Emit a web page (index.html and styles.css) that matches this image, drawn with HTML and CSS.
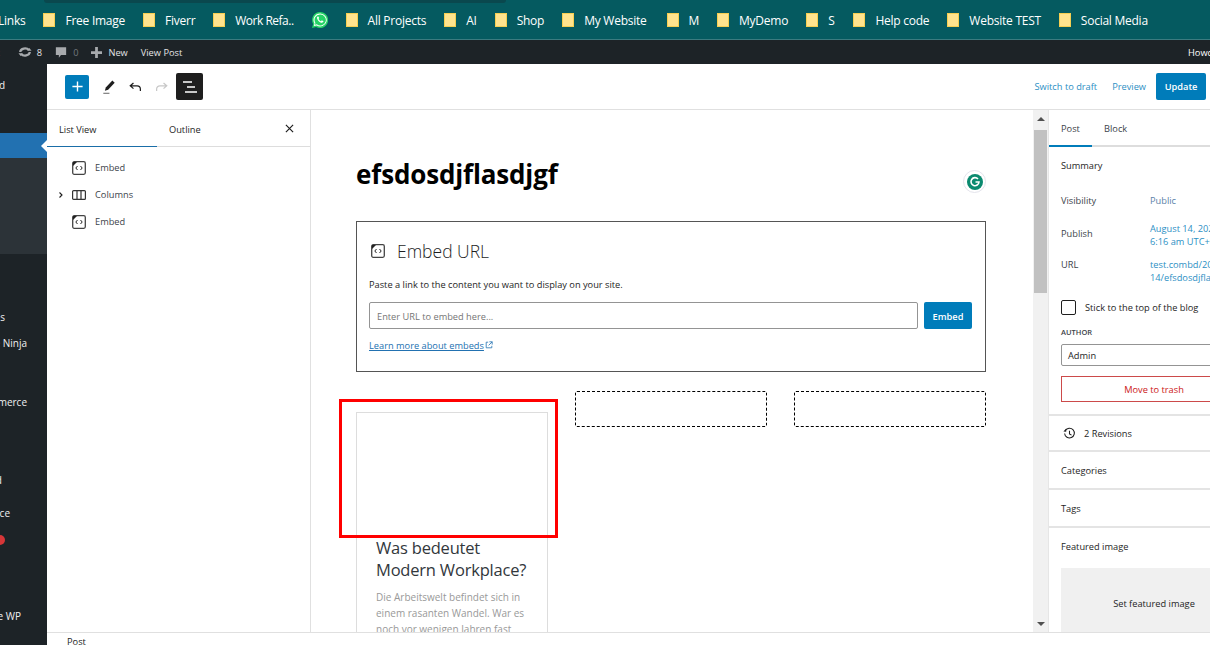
FILE: index.html
```html
<!DOCTYPE html>
<html lang="en">
<head>
    <meta charset="UTF-8">
    <meta name="viewport" content="width=device-width, initial-scale=1.0">
    <title>Edit Post</title>
    <link rel="stylesheet" href="styles.css">
</head>

<body>
    <!-- browser bookmarks -->
    <div class="bookmarks">
        <span class="tab-edge"></span>
        <span class="bm bm-first">Links</span>
        <span class="bm"><i class="folder"></i>Free Image</span>
        <span class="bm"><i class="folder"></i>Fiverr</span>
        <span class="bm bm-tight"><i class="folder"></i>Work Refa..</span>
        <span class="bm">
            <svg class="wa" viewBox="0 0 16 16"><path fill="#25d366" d="M8 0a8 8 0 0 0-6.9 12L0 16l4.100-1.100A8 8 0 1 0 8 0z"/><path fill="#fff" d="M8 1.500a6.500 6.500 0 0 0-5.500 9.900l-.7 2.700 2.800-.7A6.500 6.500 0 1 0 8 1.500z"/><path fill="#25d366" d="M8 2.500a5.500 5.500 0 0 0-4.600 8.400l-.4 1.800 1.800-.5A5.500 5.500 0 1 0 8 2.500z"/><path fill="#fff" d="M5.900 4.500c-.3 0-.8.400-.9 1.100-.1 1 .5 2.200 1.500 3.300 1 1.100 2.300 1.900 3.300 1.900.8 0 1.500-.6 1.600-1.200 0-.3 0-.5-.1-.5l-1.300-.7c-.2-.1-.3 0-.4.100l-.5.700c-.1.100-.2.100-.4 0-.9-.4-1.700-1.200-2.200-2.100-.1-.2 0-.3.100-.4l.4-.5c.1-.1.100-.2 0-.4l-.6-1.200c-.1-.2-.3-.2-.5-.2z"/></svg>
        </span>
        <span class="bm"><i class="folder"></i>All Projects</span>
        <span class="bm"><i class="folder"></i>AI</span>
        <span class="bm"><i class="folder"></i>Shop</span>
        <span class="bm bm-wide"><i class="folder"></i>My Website</span>
        <span class="bm"><i class="folder"></i>M</span>
        <span class="bm"><i class="folder"></i>MyDemo</span>
        <span class="bm bm-wide2"><i class="folder"></i>S</span>
        <span class="bm"><i class="folder"></i>Help code</span>
        <span class="bm"><i class="folder"></i>Website TEST</span>
        <span class="bm"><i class="folder"></i>Social Media</span>
    </div>

    <!-- wp admin bar -->
    <div class="adminbar">
        <span class="ab-item ab-first">Post</span>
        <span class="ab-item">
            <svg class="ab-icon ab-sync" viewBox="0 0 16 16"><path fill="none" stroke="#a7aaad" stroke-width="2.600" d="M2.500 8a5.500 4.500 0 0 1 10-2.200M13.500 8a5.500 4.500 0 0 1-10 2.200"/><path fill="#a7aaad" d="M10.500 6.500h5l-2.500-3zM5.500 9.500h-5l2.500 3z"/></svg>
            8
        </span>
        <span class="ab-item ab-muted">
            <svg class="ab-icon ab-comment" viewBox="0 0 14 14"><path fill="#a7aaad" d="M1 1h12v9H7l-2.500 3v-3H1z"/></svg>
            0
        </span>
        <span class="ab-item">
            <svg class="ab-icon ab-plus" viewBox="0 0 12 12"><path fill="#a7aaad" d="M4.500 0h3v4.500H12v3H7.500V12h-3V7.500H0v-3h4.500z"/></svg>
            New
        </span>
        <span class="ab-item">View Post</span>
        <span class="howdy">Howdy, Admin</span>
    </div>

    <div class="page">
        <!-- wp admin menu, mostly cut off by the window -->
        <nav class="adminmenu">
            <div class="menu-item m-dash">Dashboard</div>
            <div class="menu-active"></div>
            <div class="menu-sub"></div>
            <div class="menu-item m-pages">Pages</div>
            <div class="menu-item m-ninja">Table Ninja</div>
            <div class="menu-item m-woo">WooCommerce</div>
            <div class="menu-item m-field">Field</div>
            <div class="menu-item m-perf">Performance</div>
            <div class="menu-badge"></div>
            <div class="menu-item m-wp">Hide WP</div>
        </nav>

        <div class="editor">
            <header class="toolbar">
                <button class="add-btn" type="button">
                    <svg viewBox="0 0 14 14"><path fill="none" stroke="#fff" stroke-width="1.500" d="M7 1.500v11M1.500 7h11"/></svg>
                </button>
                <svg class="tool tool-pen" viewBox="0 0 16 18"><path fill="#1e1e1e" d="M11.800 1.500l2.700 2.500-7.500 8.200-3.700 1.200 1-3.700z"/><path fill="#888" d="M1.500 15.500h7v1.500h-7z"/></svg>
                <svg class="tool tool-undo" viewBox="0 0 16 12"><path fill="none" stroke="#1e1e1e" stroke-width="1.500" d="M5.500 1L1.500 4.500 5.500 8M1.500 4.500h8.500a4 4 0 0 1 4 4v2.500"/></svg>
                <svg class="tool tool-redo" viewBox="0 0 16 12"><path fill="none" stroke="#c8c8c8" stroke-width="1.500" d="M10.500 1l4 3.500-4 3.500M14.500 4.500H6a4 4 0 0 0-4 4v2.500"/></svg>
                <button class="list-btn" type="button">
                    <svg viewBox="0 0 14 12"><path fill="none" stroke="#fff" stroke-width="1.300" d="M0 1h9M4 6h8M2 11h12"/></svg>
                </button>
                <div class="toolbar-right">
                    <a class="tb-link">Switch to draft</a>
                    <a class="tb-link">Preview</a>
                    <button class="update-btn" type="button">Update</button>
                </div>
            </header>

            <div class="workspace">
                <aside class="listview">
                    <div class="lv-tabs">
                        <span class="lv-tab lv-tab-active">List View</span>
                        <span class="lv-tab">Outline</span>
                        <svg class="lv-close" viewBox="0 0 10 10"><path fill="none" stroke="#1e1e1e" stroke-width="1.300" d="M1 1l8 8M9 1l-8 8"/></svg>
                    </div>
                    <div class="lv-row">
                        <svg class="embed-icon" viewBox="0 0 14 14"><rect x=".7" y=".7" width="12.600" height="12.600" rx="1.500" fill="none" stroke="#444" stroke-width="1.300"/><path fill="#222" d="M1 1h4L1 5z"/><path fill="none" stroke="#222" d="M5.500 5L3.800 7l1.700 2M8.500 5l1.700 2-1.700 2"/></svg>
                        Embed
                    </div>
                    <div class="lv-row">
                        <svg class="lv-caret" viewBox="0 0 6 8"><path fill="none" stroke="#1e1e1e" stroke-width="1.100" d="M1.500 1.500l2.500 2.500-2.500 2.500"/></svg>
                        <svg class="embed-icon" viewBox="0 0 14 12"><rect x=".6" y="1.600" width="12.800" height="8.800" rx="1" fill="none" stroke="#333" stroke-width="1.200"/><path stroke="#333" stroke-width="1.200" d="M5 2v8M9 2v8"/></svg>
                        Columns
                    </div>
                    <div class="lv-row">
                        <svg class="embed-icon" viewBox="0 0 14 14"><rect x=".7" y=".7" width="12.600" height="12.600" rx="1.500" fill="none" stroke="#444" stroke-width="1.300"/><path fill="#222" d="M1 1h4L1 5z"/><path fill="none" stroke="#222" d="M5.500 5L3.800 7l1.700 2M8.500 5l1.700 2-1.700 2"/></svg>
                        Embed
                    </div>
                </aside>

                <main class="content">
                    <h1 class="post-title">efsdosdjflasdjgf</h1>
                    <span class="grammarly">
                        <svg viewBox="0 0 16 16"><circle cx="8" cy="8" r="8" fill="#0b8a6f"/><path fill="none" stroke="#fff" stroke-width="1.600" d="M11 5a4 4 0 1 0 1 3H8.500"/></svg>
                    </span>

                    <section class="embed-box">
                        <div class="embed-head">
                            <svg class="embed-icon" viewBox="0 0 14 14"><rect x=".7" y=".7" width="12.600" height="12.600" rx="1.500" fill="none" stroke="#444" stroke-width="1.300"/><path fill="#222" d="M1 1h4L1 5z"/><path fill="none" stroke="#222" d="M5.500 5L3.800 7l1.700 2M8.500 5l1.700 2-1.700 2"/></svg>
                            Embed URL
                        </div>
                        <p class="embed-text">Paste a link to the content you want to display on your site.</p>
                        <div class="embed-form">
                            <input class="embed-input" type="text" placeholder="Enter URL to embed here...">
                            <button class="embed-btn" type="button">Embed</button>
                        </div>
                        <a class="embed-learn">Learn more about embeds</a>
                        <svg class="ext-icon" viewBox="0 0 10 10"><path fill="none" stroke="#2271b1" d="M4 1.500H1.500v7h7V6M5.500 1h3.500v3.500M9 1L4.500 5.500"/></svg>
                    </section>

                    <div class="columns">
                        <div class="col">
                            <div class="card">
                                <div class="card-img"></div>
                                <h3>Was bedeutet Modern Workplace?</h3>
                                <p>Die Arbeitswelt befindet sich in einem rasanten Wandel. War es noch vor wenigen Jahren fast undenkbar</p>
                            </div>
                            <div class="red-mark"></div>
                        </div>
                        <div class="col"><div class="slot"></div></div>
                        <div class="col"><div class="slot"></div></div>
                    </div>
                </main>

                <div class="scrollbar">
                    <span class="sb-up"></span>
                    <span class="sb-thumb"></span>
                    <span class="sb-down"></span>
                </div>

                <aside class="settings">
                    <div class="set-tabs">
                        <span class="set-tab set-tab-active">Post</span>
                        <span class="set-tab">Block</span>
                    </div>
                    <div class="panel panel-summary">
                        <div class="panel-title">Summary</div>
                        <div class="meta meta-vis"><span>Visibility</span><a class="meta-val">Public</a></div>
                        <div class="meta meta-pub"><span>Publish</span><a class="meta-val">August 14, 2023<br>6:16 am UTC+0</a></div>
                        <div class="meta meta-url"><span>URL</span><a class="meta-val">test.combd/2023/08/<br>14/efsdosdjflasdjgf</a></div>
                        <label class="stick"><i class="check"></i>Stick to the top of the blog</label>
                        <div class="author-label">AUTHOR</div>
                        <div class="author-select">Admin</div>
                        <button class="trash-btn" type="button">Move to trash</button>
                    </div>
                    <div class="panel panel-rev">
                        <svg viewBox="0 0 16 16"><path fill="none" stroke="#1e1e1e" stroke-width="1.300" d="M2.800 4.500A6 6 0 1 1 2 8M8 4.500V8.500l2.500 1.500"/><path fill="#1e1e1e" d="M.5 5.500l3.500.3L3.700 2z"/></svg>
                        2 Revisions
                    </div>
                    <div class="panel panel-row">Categories</div>
                    <div class="panel panel-row">Tags</div>
                    <div class="panel panel-image">
                        <div class="panel-row-title">Featured image</div>
                        <div class="image-box">Set featured image</div>
                    </div>
                </aside>
            </div>

            <footer class="statusbar">Post</footer>
        </div>
    </div>
</body>
</html>
```

FILE: styles.css
```css
*{
    box-sizing: border-box;
}
html,body{
    margin: 0;
    height: 100%;
    overflow: hidden;
}
body{
    width: 1210px;
    height: 645px;
    display: flex;
    flex-direction: column;
    font-family: "Open Sans", "Noto Sans", sans-serif;
    font-size: 9.25px;
    color: #1e1e1e;
    background: white;
}
button{
    font-family: inherit;
    border: 0;
    padding: 0;
}

/* bookmarks */
.bookmarks{
    position: relative;
    height: 40px;
    flex: none;
    display: flex;
    align-items: center;
    background: #055a60;
    border-bottom: 1px solid #3b7b80;
    padding-top: 1px;
    color: #fff;
    font-size: 12px;
    letter-spacing: -0.25px;
    white-space: nowrap;
}
.tab-edge{
    position: absolute;
    top: 0;
    left: 44px;
    width: 462px;
    height: 3px;
    background: #0a484e;
    border-radius: 0 0 6px 6px;
}
.bm{
    display: flex;
    align-items: center;
    flex: none;
    margin-right: 18px;
}
.bm-first{
    margin-left: -2px;
    margin-right: 18px;
}
.bm-tight{
    letter-spacing: -0.5px;
}
.bm-wide{
    margin-right: 20px;
}
.bm-wide2{
    margin-right: 19px;
}
.folder{
    width: 12px;
    height: 14px;
    margin-right: 10px;
    background: #ffe38e;
    border: 1px solid #f6cf52;
}
.wa{
    width: 16px;
    height: 16px;
}

/* admin bar */
.adminbar{
    height: 24px;
    flex: none;
    display: flex;
    align-items: center;
    background: #1d2327;
    color: #e4e4e6;
    font-size: 9.25px;
    white-space: nowrap;
}
.ab-item{
    display: flex;
    align-items: center;
    flex: none;
    gap: 6px;
    margin-right: 13px;
}
.ab-first{
    margin-left: -19px;
    margin-right: 18px;
}
.ab-muted{
    color: #72777c;
}
.ab-icon{
    width: 13px;
    height: 13px;
}
.ab-sync{
    width: 14px;
    height: 14px;
    margin-right: -1px;
}
.ab-comment{
    width: 12px;
}
.ab-plus{
    width: 11px;
    height: 11px;
}
.howdy{
    margin-left: auto;
    width: 22px;
    flex: none;
    color: #fff;
    overflow: hidden;
}

/* admin menu */
.page{
    flex: 1;
    min-height: 0;
    display: flex;
}
.adminmenu{
    width: 47px;
    flex: none;
    background: #1d2327;
    color: #f0f0f1;
    font-size: 10px;
    position: relative;
    display: flex;
    flex-direction: column;
    white-space: nowrap;
}
.menu-item{
    display: flex;
    justify-content: flex-end;
    height: 16px;
    line-height: 16px;
}
.m-dash{
    margin-top: 13px;
    width: 5px;
}
.menu-active{
    margin-top: 40px;
    height: 25px;
    background: #2271b1;
    position: relative;
}
.menu-active::after{
    content: "";
    position: absolute;
    right: 0;
    top: 7px;
    border: 6px solid transparent;
    border-right-color: #fff;
}
.menu-sub{
    height: 96px;
    background: #2c3338;
}
.m-pages{
    margin-top: 55px;
    width: 5px;
}
.m-ninja{
    margin-top: 10px;
    width: 27px;
}
.m-woo{
    margin-top: 43px;
    width: 27px;
}
.m-field{
    margin-top: 62px;
    width: 2px;
}
.m-perf{
    margin-top: 17px;
    width: 10px;
}
.menu-badge{
    width: 10px;
    height: 10px;
    margin: 14px 0 0 -5px;
    border-radius: 50%;
    background: #d63638;
}
.m-wp{
    margin-top: 63px;
    width: 21px;
}

/* editor */
.editor{
    flex: 1;
    min-width: 0;
    display: flex;
    flex-direction: column;
}
.toolbar{
    height: 46px;
    flex: none;
    display: flex;
    align-items: center;
    padding-left: 18px;
    border-bottom: 1px solid #e0e0e0;
}
.add-btn{
    width: 24px;
    height: 24px;
    background: #007cba;
    border-radius: 2px;
    display: flex;
    align-items: center;
    justify-content: center;
}
.add-btn svg{
    width: 13px;
    height: 13px;
}
.tool{
    flex: none;
}
.tool-pen{
    width: 14px;
    height: 16px;
    margin-left: 13px;
}
.tool-undo{
    width: 13px;
    height: 10px;
    margin-left: 13px;
}
.tool-redo{
    width: 13px;
    height: 10px;
    margin-left: 13px;
}
.list-btn{
    width: 27px;
    height: 27px;
    margin-left: 8px;
    background: #1e1e1e;
    border-radius: 2px;
    display: flex;
    align-items: center;
    justify-content: center;
}
.list-btn svg{
    width: 14px;
    height: 12px;
}
.toolbar-right{
    margin-left: auto;
    display: flex;
    align-items: center;
    padding-right: 4px;
}
.tb-link{
    color: #2d8fc4;
    margin-right: 15px;
}
.tb-link + .tb-link{
    margin-right: 10px;
}
.update-btn{
    width: 50px;
    height: 27px;
    background: #007cba;
    color: #fff;
    border-radius: 2px;
    font-size: 9.25px;
    font-weight: 600;
}
.workspace{
    flex: 1;
    min-height: 0;
    display: flex;
    overflow: hidden;
}

/* list view panel */
.listview{
    width: 264px;
    flex: none;
    border-right: 1px solid #e0e0e0;
}
.lv-tabs{
    position: relative;
    height: 37px;
    display: flex;
    border-bottom: 1px solid #ddd;
}
.lv-tab{
    width: 110px;
    padding: 13px 0 0 12px;
}
.lv-tab-active{
    border-bottom: 1px solid #1a6ea8;
    height: 37px;
}
.lv-close{
    position: absolute;
    right: 16px;
    top: 14px;
    width: 9px;
    height: 9px;
}
.lv-row{
    position: relative;
    height: 27px;
    display: flex;
    align-items: center;
    padding-left: 25px;
    gap: 9px;
    color: #3c434a;
}
.lv-tabs + .lv-row{
    margin-top: 7px;
}
.embed-icon{
    width: 14px;
    height: 14px;
    flex: none;
}
.lv-caret{
    position: absolute;
    left: 11px;
    width: 6px;
    height: 8px;
}

/* post content */
.content{
    position: relative;
    width: 722px;
    flex: none;
    overflow: hidden;
    padding: 0 47px 0 45px;
}
.post-title{
    margin: 46px 0 0;
    font-size: 26px;
    line-height: 36px;
    font-weight: 700;
    color: #000;
    letter-spacing: -0.15px;
}
.grammarly{
    position: absolute;
    left: 652px;
    top: 60px;
    width: 23px;
    height: 23px;
    border: 1px solid #e4e4ec;
    border-radius: 50%;
    display: flex;
    align-items: center;
    justify-content: center;
}
.grammarly svg{
    width: 16px;
    height: 16px;
}
.embed-box{
    margin-top: 29px;
    height: 151px;
    border: 1px solid #555;
    padding: 17px 13px 0 12px;
}
.embed-head{
    display: flex;
    align-items: center;
    gap: 12px;
    margin-left: 2px;
    height: 24px;
    font-size: 17.5px;
    font-weight: 300;
    color: #1e1e1e;
}
.embed-text{
    margin: 14px 0 0;
    line-height: 16px;
    color: #1e1e1e;
}
.embed-form{
    display: flex;
    margin-top: 9px;
    gap: 6px;
}
.embed-input{
    flex: 1;
    height: 27px;
    border: 1px solid #949494;
    border-radius: 2px;
    padding: 1px 7px 0;
    font-family: inherit;
    font-size: 9.25px;
}
.embed-input::placeholder{
    color: #757575;
}
.embed-btn{
    width: 48px;
    height: 27px;
    padding-top: 1px;
    border-radius: 2px;
    background: #007cba;
    color: #fff;
    font-size: 9.25px;
    font-weight: 600;
}
.embed-learn{
    display: inline-block;
    margin-top: 10px;
    color: #2271b1;
    text-decoration: underline;
}
.ext-icon{
    width: 8px;
    height: 8px;
    margin-left: -1px;
}
.columns{
    display: flex;
    gap: 27px;
    margin-top: 19px;
}
.col{
    position: relative;
    width: 192px;
}
.slot{
    height: 36px;
    border: 1px dashed #000;
    border-radius: 2px;
}
.card{
    margin-top: 21px;
    border: 1px solid #ddd;
    padding-bottom: 20px;
}
.card-img{
    height: 121px;
}
.card h3{
    margin: 3px 0 0;
    padding: 0 19px;
    font-size: 16.5px;
    line-height: 22px;
    font-weight: 500;
    color: #32373c;
    letter-spacing: -0.2px;
}
.card p{
    margin: 8px 0 0;
    padding: 0 19px;
    font-size: 10px;
    line-height: 16px;
    color: #999;
}
.red-mark{
    position: absolute;
    left: -17px;
    top: 8px;
    width: 219px;
    height: 139px;
    border: 3px solid #f00;
}

/* scrollbar */
.scrollbar{
    width: 16px;
    flex: none;
    background: #f1f1f1;
    border-right: 1px solid #e6e6e6;
    display: flex;
    flex-direction: column;
    align-items: center;
}
.sb-up,.sb-down{
    width: 0;
    height: 0;
    border: 4px solid transparent;
    margin-top: 2px;
}
.sb-up{
    border-bottom: 4px solid #505050;
    border-top: 0;
    margin-top: 7px;
    margin-bottom: 9px;
}
.sb-thumb{
    width: 13px;
    height: 163px;
    background: #c1c1c1;
}
.sb-down{
    margin-top: auto;
    margin-bottom: 6px;
    border-top: 4px solid #505050;
    border-bottom: 0;
}

/* settings panel */
.settings{
    width: 210px;
    flex: none;
    overflow: hidden;
}
.set-tabs{
    height: 37px;
    display: flex;
    border-bottom: 2px solid #ddd;
}
.set-tab{
    height: 37px;
    padding: 12px 12px 0;
    color: #3c434a;
}
.set-tab-active{
    width: 43px;
    border-bottom: 2px solid #007cba;
}
.panel{
    border-bottom: 2px solid #e4e4e4;
    padding: 0 12px;
}
.panel-summary{
    height: 269px;
    position: relative;
}
.panel-title{
    padding-top: 12px;
    line-height: 13px;
}
.meta{
    display: flex;
    line-height: 13px;
    color: #3c434a;
}
.meta > span{
    width: 89px;
}
.meta-val{
    color: #2d8fc4;
    white-space: nowrap;
}
.meta-vis{
    margin-top: 22px;
}
.meta-vis .meta-val{
    color: #5a7fa8;
}
.meta-pub{
    margin-top: 15px;
}
.meta-pub > span{
    padding-top: 5px;
}
.meta-url{
    margin-top: 10px;
}
.stick{
    display: flex;
    align-items: center;
    gap: 9px;
    margin-top: 16px;
    height: 15px;
}
.check{
    width: 15px;
    height: 15px;
    border: 1px solid #1e1e1e;
    border-radius: 2px;
}
.author-label{
    margin-top: 11px;
    font-size: 7.5px;
    font-weight: 600;
    line-height: 12px;
    color: #3c434a;
}
.author-select{
    width: 186px;
    height: 22px;
    margin-top: 6px;
    padding-left: 6px;
    line-height: 21px;
    border: 1px solid #949494;
    border-radius: 2px;
}
.trash-btn{
    display: block;
    width: 186px;
    height: 26px;
    margin-top: 10px;
    background: #fff;
    border: 1px solid #cc4a4a;
    color: #cc1818;
    font-size: 9.25px;
}
.panel-rev{
    height: 36px;
    display: flex;
    align-items: center;
    gap: 8px;
    padding-left: 14px;
}
.panel-rev svg{
    width: 13px;
    height: 13px;
}
.panel-row{
    height: 38px;
    display: flex;
    align-items: center;
}
.panel-image{
    border: 0;
}
.panel-row-title{
    height: 40px;
    padding-top: 12px;
}
.image-box{
    width: 186px;
    height: 70px;
    background: #f0f0f0;
    display: flex;
    align-items: center;
    justify-content: center;
    color: #1e1e1e;
}

/* bottom bar */
.statusbar{
    height: 13px;
    flex: none;
    background: #fff;
    border-top: 1px solid #e0e0e0;
    padding: 3px 0 0 20px;
    line-height: 12px;
    overflow: hidden;
    position: relative;
}
```
